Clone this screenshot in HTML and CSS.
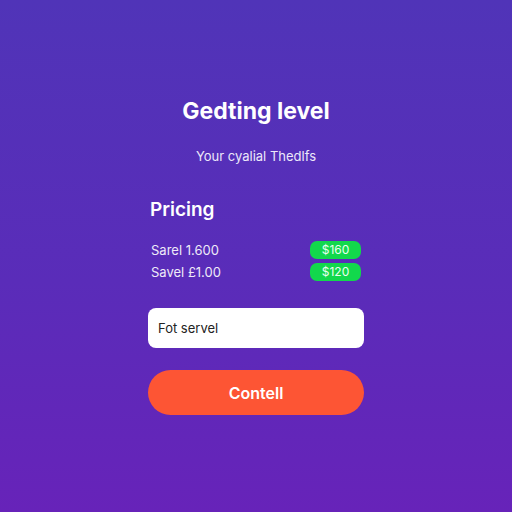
FILE: index.html
```html
<!DOCTYPE html>
<html lang="en">
<head>
  <meta charset="UTF-8">
  <meta name="viewport" content="width=device-width, initial-scale=1.0">
  <title>Gedting level</title>
  <link rel="stylesheet" href="styles.css">
</head>
<body>
  <div class="container">
    <h1 class="title">Gedting level</h1>
    <p class="subtitle">Your cyalial Thedlfs</p>

    <h2 class="section-title">Pricing</h2>
    <ul class="price-list">
      <li class="price-row">
        <span class="price-label">Sarel 1.600</span>
        <span class="price-badge">$160</span>
      </li>
      <li class="price-row">
        <span class="price-label">Savel £1.00</span>
        <span class="price-badge">$120</span>
      </li>
    </ul>

    <div class="field">Fot servel</div>

    <button type="button" class="primary-btn">Contell</button>
  </div>
</body>
</html>
```

FILE: styles.css
```css
html, body {
  height: 100%;
}

body {
  margin: 0;
  font-family: Inter, "Noto Sans", sans-serif;
  color: #fff;
  background: linear-gradient(180deg, #5034b8 0%, #5a2cb9 55%, #6723b9 100%);
}

.container {
  width: 216px;
  margin: 0 auto;
  padding-top: 97px;
  display: flex;
  flex-direction: column;
}

.title {
  margin: 0;
  text-align: center;
  font-size: 23px;
  font-weight: 700;
  line-height: 28px;
}

.subtitle {
  margin: 23px 0 0;
  text-align: center;
  font-size: 13px;
  line-height: 16px;
  color: #ece8fa;
}

.section-title {
  margin: 34px 0 0 2px;
  font-size: 19px;
  font-weight: 600;
  line-height: 24px;
}

.price-list {
  list-style: none;
  margin: 19px 0 0;
  padding: 0;
  display: flex;
  flex-direction: column;
  gap: 4px;
}

.price-row {
  display: flex;
  justify-content: space-between;
  align-items: center;
  padding: 0 3px;
}

.price-label {
  font-size: 13px;
  color: #eeeaf8;
}

.price-badge {
  width: 51px;
  height: 18px;
  border-radius: 7px;
  background: #12d84c;
  color: #eafff0;
  font-size: 12px;
  line-height: 18px;
  text-align: center;
}

.field {
  margin-top: 27px;
  height: 40px;
  padding: 0 10px;
  border-radius: 8px;
  background: #fff;
  color: #222;
  font-size: 13px;
  line-height: 40px;
}

.primary-btn {
  margin-top: 22px;
  height: 45px;
  border: none;
  border-radius: 23px;
  background: #fd5534;
  color: #fff;
  font-family: inherit;
  font-size: 16px;
  font-weight: 600;
  cursor: pointer;
}
```
